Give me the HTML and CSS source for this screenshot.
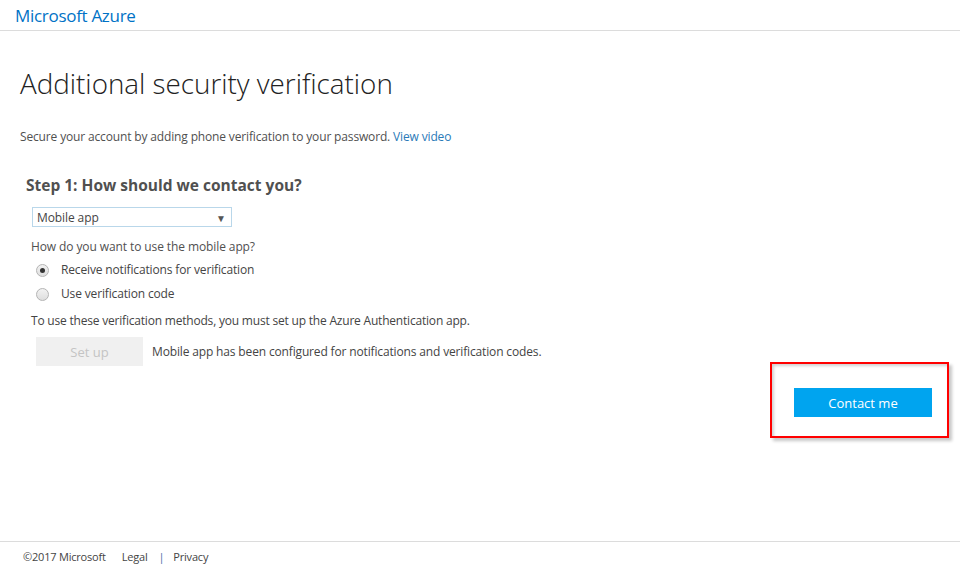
FILE: index.html
```html
<!DOCTYPE html>
<html lang="en">
<head>
<meta charset="utf-8">
<title>Additional security verification</title>
<link rel="stylesheet" href="styles.css">
</head>
<body>
<div class="page">
  <header class="topbar">
    <span class="brand">Microsoft Azure</span>
  </header>
  <main class="content">
    <h1 class="title">Additional security verification</h1>
    <p class="intro">Secure your account by adding phone verification to your password. <a class="link" href="#">View video</a></p>
    <section class="step">
      <h2 class="step-title">Step 1: How should we contact you?</h2>
      <div class="select">
        <span class="select-value">Mobile app</span>
        <span class="select-arrow">&#9660;</span>
      </div>
      <p class="question">How do you want to use the mobile app?</p>
      <div class="radios">
        <label class="radio-row"><span class="radio checked"></span><span>Receive notifications for verification</span></label>
        <label class="radio-row"><span class="radio"></span><span>Use verification code</span></label>
      </div>
      <p class="note">To use these verification methods, you must set up the Azure Authentication app.</p>
      <div class="setup-row">
        <span class="btn-setup">Set up</span>
        <span class="setup-status">Mobile app has been configured for notifications and verification codes.</span>
      </div>
    </section>
    <div class="actions">
      <div class="highlight">
        <span class="btn-primary">Contact me</span>
      </div>
    </div>
  </main>
  <footer class="footer">
    <span class="copy">&copy;2017 Microsoft</span>
    <a class="foot-link" href="#">Legal</a>
    <span class="sep">|</span>
    <a class="foot-link" href="#">Privacy</a>
  </footer>
</div>
</body>
</html>
```
FILE: styles.css
```css
* { box-sizing: border-box; }
html, body { margin: 0; padding: 0; background: #fff; }
body {
  font-family: "Open Sans", "Noto Sans", "Liberation Sans", sans-serif;
  color: #444;
}
.page {
  min-height: 572px;
  display: flex;
  flex-direction: column;
}
.topbar {
  height: 31px;
  border-bottom: 1px solid #dcdcdc;
  padding: 4px 0 0 15px;
}
.brand {
  font-size: 17px;
  color: #0072c6;
  letter-spacing: -0.3px;
  line-height: 24px;
}
.content {
  flex: 1;
  padding: 0 0 0 20px;
}
.title {
  margin: 34px 0 0 0;
  font-size: 27.8px;
  font-weight: 300;
  color: #222;
  line-height: 36px;
  letter-spacing: 0;
}
.intro {
  margin: 27px 0 0 0;
  font-size: 12px;
  line-height: 18px;
  color: #505050;
  letter-spacing: -0.15px;
}
.link { color: #2a7ab8; text-decoration: none; }
.step { padding-left: 6px; }
.step-title {
  margin: 29px 0 0 0;
  font-size: 15.5px;
  font-weight: 700;
  color: #505050;
  line-height: 20px;
}
.select {
  margin: 12px 0 0 6px;
  width: 200px;
  height: 20px;
  border: 1px solid #b9d7ea;
  display: flex;
  align-items: center;
  justify-content: space-between;
  padding: 1px 5px 0 4px;
}
.select-value { font-size: 12px; color: #444; line-height: 18px; letter-spacing: -0.1px; }
.select-arrow { font-size: 10px; color: #555; }
.question {
  margin: 11px 0 0 5px;
  font-size: 12px;
  line-height: 18px;
  color: #505050;
  letter-spacing: -0.1px;
}
.radios {
  margin: 5px 0 0 10px;
  display: flex;
  flex-direction: column;
  gap: 6px;
}
.radio-row {
  display: flex;
  align-items: center;
  gap: 12px;
  font-size: 12px;
  line-height: 18px;
  color: #444;
  letter-spacing: -0.15px;
}
.radio {
  width: 13px;
  height: 13px;
  border-radius: 50%;
  border: 1px solid #b4b4b4;
  background: linear-gradient(#f2f2f2, #dedede);
  display: flex;
  align-items: center;
  justify-content: center;
}
.radio.checked::after {
  content: "";
  width: 5px;
  height: 5px;
  border-radius: 50%;
  background: #333;
}
.note {
  margin: 9px 0 0 5px;
  font-size: 12px;
  line-height: 18px;
  color: #444;
  letter-spacing: -0.2px;
}
.setup-row {
  margin: 7px 0 0 10px;
  display: flex;
  align-items: center;
  gap: 9px;
}
.btn-setup {
  width: 107px;
  height: 29px;
  background: #f0f0f0;
  color: #c4c4c4;
  font-size: 13px;
  display: flex;
  align-items: center;
  justify-content: center;
}
.setup-status {
  font-size: 12px;
  color: #444;
  letter-spacing: -0.15px;
}
.actions {
  display: flex;
  justify-content: flex-end;
  padding-right: 11px;
  margin-top: -4px;
}
.highlight {
  width: 179px;
  height: 76px;
  border: 2px solid #f00;
  box-shadow: inset 2px 2px 3px rgba(0,0,0,0.18), 3px 3px 3px rgba(0,0,0,0.22);
  padding: 24px 0 0 22px;
}
.btn-primary {
  width: 138px;
  height: 29px;
  background: #00a4ef;
  color: #fff;
  font-size: 13px;
  display: flex;
  align-items: center;
  justify-content: center;
}
.footer {
  height: 31px;
  border-top: 1px solid #dcdcdc;
  display: flex;
  align-items: center;
  padding: 0 0 2px 23px;
  font-size: 11px;
  color: #444;
  letter-spacing: -0.2px;
}
.copy { margin-right: 16px; }
.foot-link { color: #444; text-decoration: none; }
.sep { margin: 0 9px 0 11px; color: #4a6fa5; }
```
